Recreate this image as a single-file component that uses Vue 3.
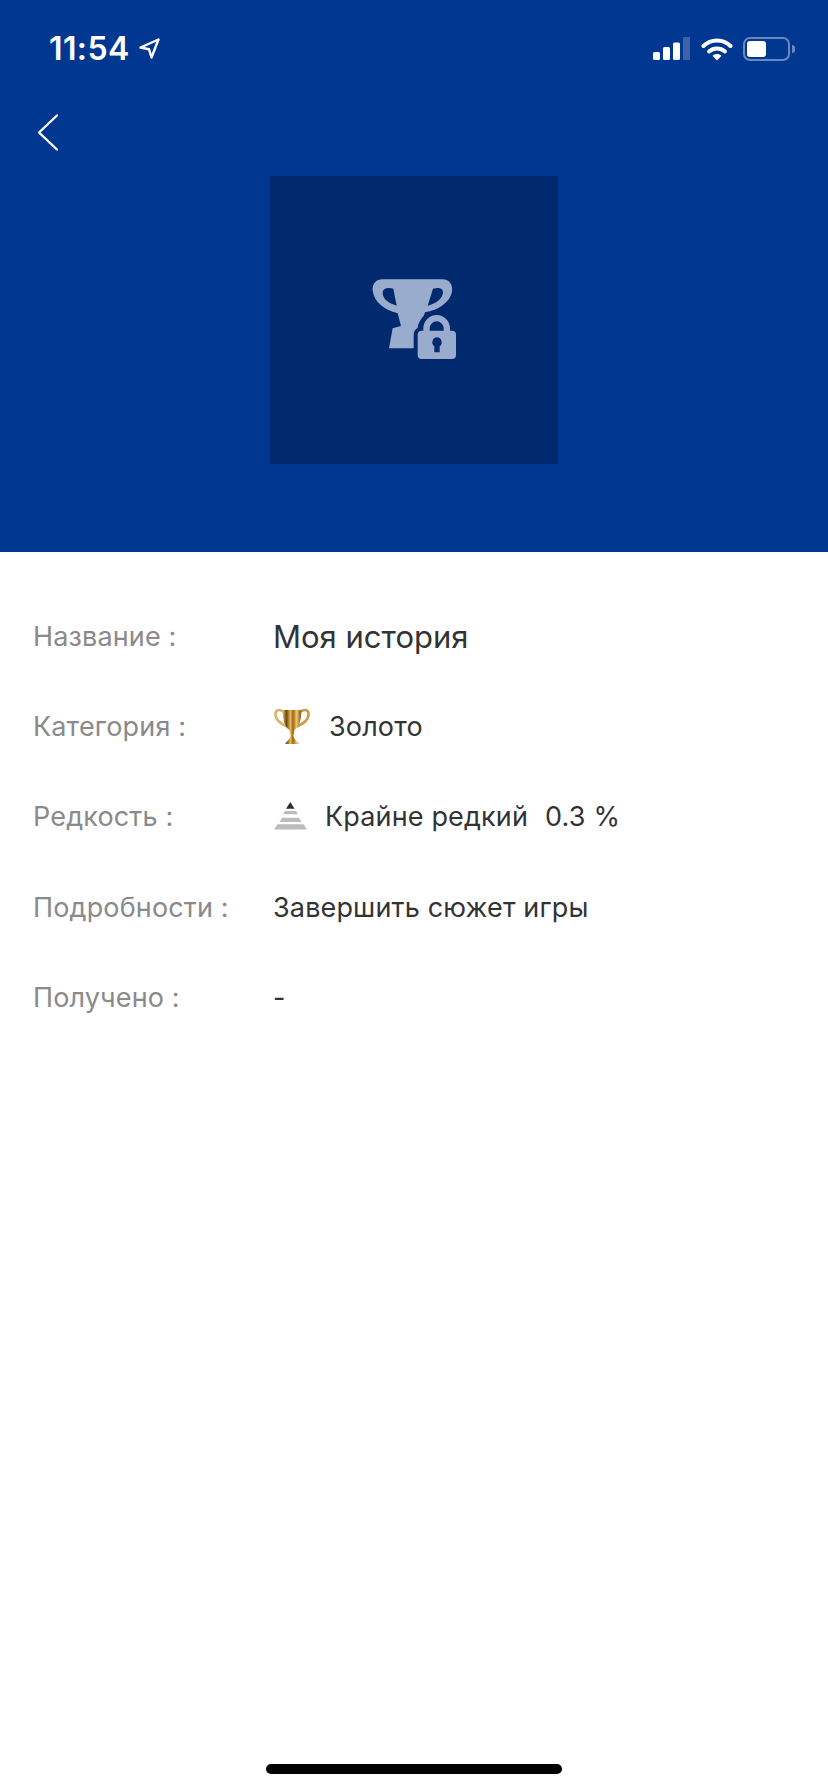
<script setup>
const rows = [
  { label: 'Название :', kind: 'title', value: 'Моя история' },
  { label: 'Категория :', kind: 'category', value: 'Золото' },
  { label: 'Редкость :', kind: 'rarity', value: 'Крайне редкий', extra: '0.3 %' },
  { label: 'Подробности :', kind: 'plain', value: 'Завершить сюжет игры' },
  { label: 'Получено :', kind: 'plain', value: '-' },
]
</script>

<template>
  <div class="page">
    <header class="hero">
      <div class="status">
        <div class="clock">
          <span class="time">11:54</span>
          <svg class="arrow" width="21" height="21" viewBox="0 0 21 21">
            <path d="M1.5 9.5 L19.5 1.5 L12.5 19.5 L10 11.2 Z" fill="none" stroke="#fff" stroke-width="2.4" stroke-linejoin="round" />
          </svg>
        </div>
        <div class="indicators">
          <svg width="38" height="23" viewBox="0 0 38 23">
            <rect x="0" y="15" width="7" height="8" rx="1.5" fill="#fff" />
            <rect x="10" y="10" width="7" height="13" rx="1.5" fill="#fff" />
            <rect x="20" y="5.5" width="7" height="17.5" rx="1.5" fill="#fff" />
            <rect x="30" y="0" width="7" height="23" rx="1" fill="#3d64ab" />
          </svg>
          <svg width="32" height="24" viewBox="0 0 32 24">
            <path d="M2.5 9 C10 1.5 22 1.5 29.5 9" fill="none" stroke="#fff" stroke-width="4" stroke-linecap="round" />
            <path d="M8 14.5 C12.5 10.5 19.5 10.5 24 14.5" fill="none" stroke="#fff" stroke-width="3.8" stroke-linecap="round" />
            <path d="M11.5 18.7 C14 16.4 18 16.4 20.5 18.7 L16 23.5 Z" fill="#fff" />
          </svg>
          <div class="battery">
            <div class="cell"><span class="charge"></span></div>
            <span class="nib"></span>
          </div>
        </div>
      </div>
      <div class="nav">
        <svg width="22" height="37" viewBox="0 0 22 37">
          <path d="M20 1.5 L2 18.5 L20 35.5" fill="none" stroke="#fff" stroke-width="2.4" stroke-linecap="round" stroke-linejoin="round" />
        </svg>
      </div>
      <div class="tile">
        <svg class="locked" width="130" height="110" viewBox="0 0 390 330">
          <path fill="#9aaccd" fill-rule="evenodd" d="M95 58 H275 C295 58 306 74 303 95 C297 127 262 150 222 157 L205 205 L190 265 H114 L125 205 L150 198 L140 160 C100 148 70 128 65 92 C63 72 75 58 95 58 Z M95 97 C97 84 112 82 127 86 L137 137 C112 130 94 116 95 97 Z M246 86 C262 82 276 84 276 97 C275 116 256 131 230 137 Z" />
          <path fill="#00296e" d="M188 310 V225 C188 215 192 208 200 203 C204 175 228 152 257 152 C286 152 310 175 314 203 C324 208 328 215 328 225 V310 Z" />
          <path fill="#9aaccd" fill-rule="evenodd" d="M212 297 A12 12 0 0 1 200 285 V224 A12 12 0 0 1 212 212 H217 V205 A40 40 0 0 1 297 205 V212 H303 A12 12 0 0 1 315 224 V285 A12 12 0 0 1 303 297 Z M236 212 H278 V205 A21 21 0 0 0 236 205 Z M258 232 A15 15 0 0 0 250 259 L250 277 H266 L266 259 A15 15 0 0 0 258 232 Z" />
        </svg>
      </div>
    </header>

    <main class="details">
      <div v-for="row in rows" :key="row.label" class="row">
        <span class="label">{{ row.label }}</span>
        <div class="value" :class="{ title: row.kind === 'title' }">
          <svg v-if="row.kind === 'category'" class="cup" width="36" height="37" viewBox="0 0 36 37">
            <defs>
              <linearGradient id="gold" x1="0" x2="1" y1="0" y2="0">
                <stop offset="0" stop-color="#e3c070" />
                <stop offset=".2" stop-color="#6f470e" />
                <stop offset=".42" stop-color="#e6b858" />
                <stop offset=".55" stop-color="#9a6518" />
                <stop offset=".75" stop-color="#edc870" />
                <stop offset="1" stop-color="#7d5012" />
              </linearGradient>
            </defs>
            <path d="M10 4 C5 0.5 1 2 1.5 7 C2 12 7 16 13 18.5" fill="none" stroke="#d8b56c" stroke-width="2.6" />
            <path d="M26 4 C31 0.5 35 2 34.5 7 C34 12 29 16 23 18.5" fill="none" stroke="#c99c48" stroke-width="2.6" />
            <path d="M8.7 2 H27.3 C27.3 12 25.5 19 20.5 22 L19.4 28 C20 31 23 33 25 36 H11 C13 33 16 31 16.6 28 L15.5 22 C10.5 19 8.7 12 8.7 2 Z" fill="url(#gold)" />
          </svg>
          <svg v-if="row.kind === 'rarity'" class="pyramid" width="33" height="28" viewBox="0 0 33 28">
            <path d="M16.3 0 L20.6 6.7 H12 Z" fill="#2f2f31" />
            <path d="M11 9 H22 L24 12.3 H9 Z" fill="#bcbcbc" />
            <path d="M8 15.7 H25 L27.5 20 H5.5 Z" fill="#bcbcbc" />
            <path d="M3.5 22.3 H29.5 L33 27.5 H0 Z" fill="#bcbcbc" />
          </svg>
          <span>{{ row.value }}</span>
          <span v-if="row.extra" class="extra">{{ row.extra }}</span>
        </div>
      </div>
    </main>

    <footer class="home"><span class="bar"></span></footer>
  </div>
</template>

<style>
html, body { margin: 0; background: #fff; }
</style>

<style scoped>
.page {
  width: 828px;
  height: 1792px;
  display: flex;
  flex-direction: column;
  font-family: Inter, "Liberation Sans", sans-serif;
  background: #fff;
}
.hero {
  height: 552px;
  background: #003791;
  display: flex;
  flex-direction: column;
  flex: none;
}
.status {
  height: 88px;
  box-sizing: border-box;
  padding: 9px 33px 0 49px;
  display: flex;
  justify-content: space-between;
  align-items: center;
}
.clock { display: flex; align-items: center; gap: 9px; color: #fff; }
.time { font-size: 32px; font-weight: 600; letter-spacing: 0.4px; }
.indicators { display: flex; align-items: center; gap: 10px; }
.battery { display: flex; align-items: center; gap: 2px; }
.cell {
  width: 47px;
  height: 24px;
  box-sizing: border-box;
  border: 2px solid #6a88c0;
  border-radius: 7px;
  padding: 2px;
}
.charge { display: block; width: 19px; height: 16px; background: #fff; border-radius: 3px; }
.nib { width: 3px; height: 8px; background: #6a88c0; border-radius: 0 3px 3px 0; }
.nav { height: 88px; display: flex; align-items: center; padding-left: 37px; }
.tile {
  width: 288px;
  height: 288px;
  background: #00296e;
  align-self: center;
  display: flex;
  align-items: center;
  justify-content: center;
}
.locked { margin: 0 0 11px 4px; }
.details { flex: 1; padding-top: 39px; }
.row {
  height: 90.3px;
  display: grid;
  grid-template-columns: 240px 1fr;
  align-items: center;
  padding-left: 33px;
}
.label { font-size: 27px; letter-spacing: 0.15px; color: #8a8a8a; }
.value {
  display: flex;
  align-items: center;
  font-size: 27px;
  letter-spacing: 0.15px;
  color: #333335;
}
.value.title { font-size: 31px; letter-spacing: 0; }
.cup { margin: 0 19px 0 1px; }
.pyramid { margin: -2px 18px 0 1px; }
.extra { margin-left: 17px; }
.home { height: 28px; flex: none; display: flex; justify-content: center; }
.bar { width: 296px; height: 10px; border-radius: 5px; background: #000; }
</style>
